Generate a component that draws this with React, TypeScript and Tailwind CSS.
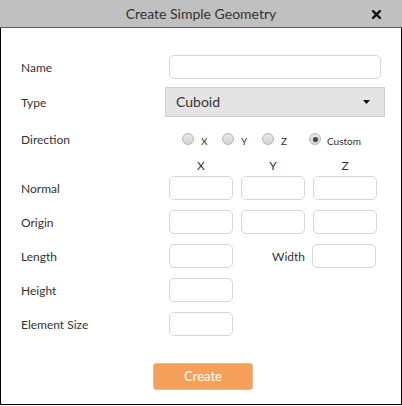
import React from "react";

function Radio({ checked }: { checked?: boolean }) {
  return (
    <div className="w-[12px] h-[12px] rounded-full border border-[#b5b5b5] bg-gradient-to-b from-[#e8e8e8] to-[#d4d4d4] flex items-center justify-center shrink-0">
      {checked && <div className="w-[5px] h-[5px] rounded-full bg-[#444]" />}
    </div>
  );
}

function Field({ w = "w-[64px]" }: { w?: string }) {
  return <div className={`${w} h-[24px] rounded-[5px] border border-[#d6d6d6] bg-white shrink-0`} />;
}

function Label({ children }: { children: React.ReactNode }) {
  return <div className="w-[148px] shrink-0 text-[12px] text-[#333] leading-none mt-[2px]">{children}</div>;
}

export default function App() {
  return (
    <div className="w-[402px] h-[406px] bg-white font-['Lato','Open_Sans',sans-serif] text-[#333]">
      <div className="relative h-[28px] bg-[#c0c0c0] border-b border-[#5a5a5a] flex items-center justify-center">
        <span className="text-[14px] text-[#333] leading-none">Create Simple Geometry</span>
        <svg className="absolute left-[372px] top-[10px]" width="9" height="9" viewBox="0 0 9 9">
          <path d="M1 1 L8 8 M8 1 L1 8" stroke="#111" strokeWidth="2.4" strokeLinecap="square" />
        </svg>
      </div>
      <div className="h-[377px] border-l border-r border-b border-black pl-[20px] flex flex-col">
        <div className="mt-[27px] flex items-center">
          <Label>Name</Label>
          <Field w="w-[212px]" />
        </div>
        <div className="mt-[8px] flex items-center">
          <div className="w-[144px] shrink-0 text-[12px] leading-none mt-[2px]">Type</div>
          <div className="w-[220px] h-[30px] bg-[#e4e4e4] border border-[#d0d0d0] flex items-center justify-between pl-[10px] pr-[14px]">
            <span className="text-[14px] text-[#333] leading-none">Cuboid</span>
            <svg width="7" height="4" viewBox="0 0 7 4">
              <path d="M0 0 L7 0 L3.5 4 Z" fill="#111" />
            </svg>
          </div>
        </div>
        <div className="mt-[15px] h-[14px] flex items-center">
          <div className="w-[161px] shrink-0 text-[12px] leading-none mt-[1px]">Direction</div>
          <div className="w-[40px] flex items-center">
            <Radio />
            <span className="ml-[7px] mt-[4px] text-[10px] leading-none">X</span>
          </div>
          <div className="w-[40px] flex items-center">
            <Radio />
            <span className="ml-[7px] mt-[4px] text-[10px] leading-none">Y</span>
          </div>
          <div className="w-[47px] flex items-center">
            <Radio />
            <span className="ml-[7px] mt-[4px] text-[10px] leading-none">Z</span>
          </div>
          <div className="flex items-center">
            <Radio checked />
            <span className="ml-[6px] mt-[4px] text-[10px] leading-none">Custom</span>
          </div>
        </div>
        <div className="mt-[14px] flex items-center text-[12px] leading-none">
          <div className="w-[148px] shrink-0" />
          <div className="w-[64px] text-center">X</div>
          <div className="w-[8px]" />
          <div className="w-[64px] text-center">Y</div>
          <div className="w-[8px]" />
          <div className="w-[64px] text-center">Z</div>
        </div>
        <div className="mt-[4px] flex items-center">
          <Label>Normal</Label>
          <div className="flex gap-[8px]">
            <Field />
            <Field />
            <Field />
          </div>
        </div>
        <div className="mt-[10px] flex items-center">
          <Label>Origin</Label>
          <div className="flex gap-[8px]">
            <Field />
            <Field />
            <Field />
          </div>
        </div>
        <div className="mt-[10px] flex items-center">
          <Label>Length</Label>
          <Field />
          <div className="w-[79px] shrink-0 text-right pr-[7px] text-[12px] leading-none mt-[2px]">Width</div>
          <Field />
        </div>
        <div className="mt-[10px] flex items-center">
          <Label>Height</Label>
          <Field />
        </div>
        <div className="mt-[10px] flex items-center">
          <Label>Element Size</Label>
          <Field />
        </div>
        <div className="mt-[27px] ml-[132px] w-[100px] h-[27px] rounded-[3px] bg-[#f5a05a] border border-[#f0b88a] flex items-center justify-center text-white text-[13px] leading-none">
          Create
        </div>
      </div>
    </div>
  );
}
